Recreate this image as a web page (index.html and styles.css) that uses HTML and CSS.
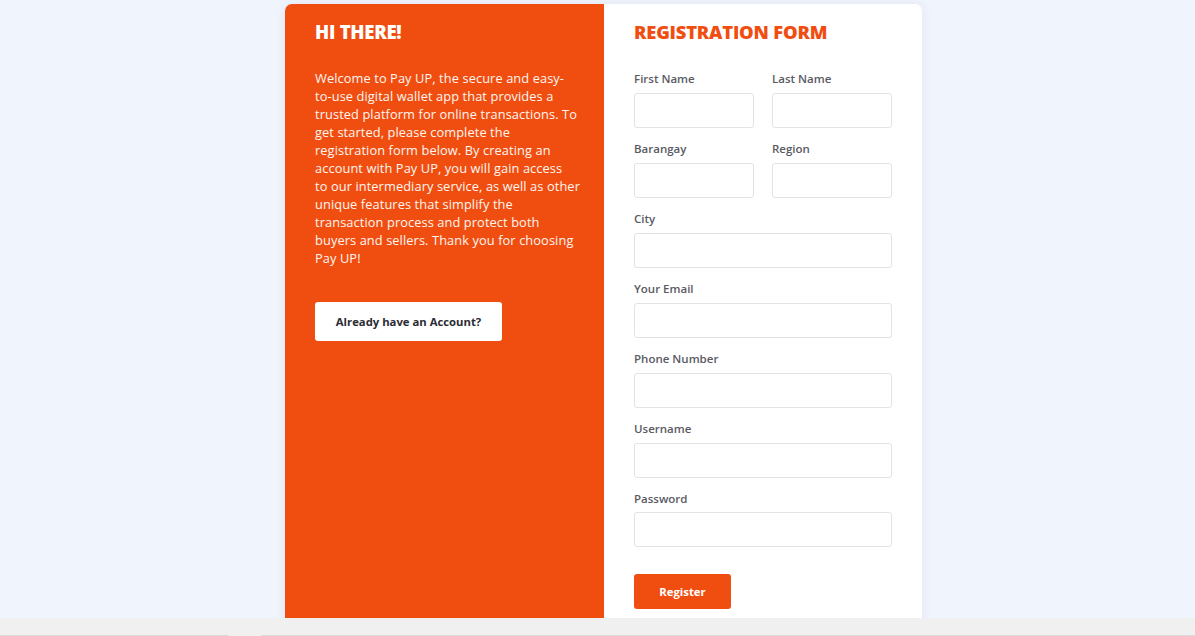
FILE: index.html
```html
<!DOCTYPE html>
<html lang="en">
<head>
<meta charset="utf-8">
<title>Pay UP - Registration</title>
<link rel="stylesheet" href="styles.css">
</head>
<body>
<div class="viewport">
  <div class="card">
    <section class="intro">
      <h1 class="intro-title">HI THERE!</h1>
      <p class="intro-text">Welcome to Pay UP, the secure and easy-<br>to-use digital wallet app that provides a<br>trusted platform for online transactions. To<br>get started, please complete the<br>registration form below. By creating an<br>account with Pay UP, you will gain access<br>to our intermediary service, as well as other<br>unique features that simplify the<br>transaction process and protect both<br>buyers and sellers. Thank you for choosing<br>Pay UP!</p>
      <button class="btn-account" type="button">Already have an Account?</button>
    </section>
    <section class="form-panel">
      <h2 class="form-title">REGISTRATION FORM</h2>
      <form class="form">
        <div class="row">
          <label class="field"><span class="label">First Name</span><input class="input" type="text"></label>
          <label class="field"><span class="label">Last Name</span><input class="input" type="text"></label>
        </div>
        <div class="row">
          <label class="field"><span class="label">Barangay</span><input class="input" type="text"></label>
          <label class="field"><span class="label">Region</span><input class="input" type="text"></label>
        </div>
        <label class="field"><span class="label">City</span><input class="input" type="text"></label>
        <label class="field"><span class="label">Your Email</span><input class="input" type="email"></label>
        <label class="field"><span class="label">Phone Number</span><input class="input" type="tel"></label>
        <label class="field"><span class="label">Username</span><input class="input" type="text"></label>
        <label class="field field-last"><span class="label">Password</span><input class="input" type="password"></label>
        <button class="btn-register" type="button">Register</button>
      </form>
    </section>
  </div>
</div>
<div class="hscroll"><div class="hscroll-thumb"></div></div>
</body>
</html>
```

FILE: styles.css
```css
* { box-sizing: border-box; }
html, body { margin: 0; padding: 0; height: 636px; overflow: hidden; }
body {
  font-family: "Open Sans", "Noto Sans", sans-serif;
  background: #f0f4fc;
  display: flex;
  flex-direction: column;
}
.viewport {
  height: 618px;
  overflow: hidden;
  display: flex;
  justify-content: center;
  padding-top: 4px;
  padding-left: 12px;
}
.card {
  display: flex;
  width: 637px;
  height: 700px;
  border-radius: 7px;
  overflow: hidden;
  background: #fff;
  box-shadow: 0 0 12px rgba(40, 60, 120, 0.08);
  flex-shrink: 0;
}
.intro {
  width: 319px;
  background: #f04e10;
  padding: 14px 30px 0 30px;
  color: #fff;
}
.intro-title {
  margin: 0;
  font-size: 18.6px;
  font-weight: 800;
  letter-spacing: -0.3px;
  line-height: 28px;
}
.intro-text {
  margin: 23px 0 0 0;
  font-size: 12.8px;
  letter-spacing: 0.1px;
  line-height: 18px;
  width: 275px;
  white-space: nowrap;
  color: #fff6f0;
}
.btn-account {
  margin-top: 35px;
  width: 187px;
  height: 39px;
  border: none;
  border-radius: 3px;
  background: #fff;
  color: #2b2b33;
  font-family: inherit;
  font-size: 11.3px;
  font-weight: 700;
  cursor: pointer;
}
.form-panel {
  flex: 1;
  padding: 14px 30px 0 30px;
}
.form-title {
  margin: 0;
  color: #f04e10;
  font-size: 18.4px;
  font-weight: 800;
  letter-spacing: -0.2px;
  line-height: 28px;
}
.form {
  margin-top: 25px;
  display: flex;
  flex-direction: column;
  gap: 13px;
}
.row {
  display: flex;
  gap: 18px;
}
.row .field { width: 120px; }
.field {
  display: flex;
  flex-direction: column;
  gap: 7px;
}
.label {
  font-size: 11.5px;
  font-weight: 600;
  color: #5a5a63;
  line-height: 15px;
}
.input {
  width: 100%;
  height: 35px;
  border: 1px solid #e3e3e6;
  border-radius: 3px;
  background: #fff;
  font-family: inherit;
  outline: none;
}
.field-last { gap: 6px; }
.btn-register {
  margin-top: 14px;
  width: 97px;
  height: 35px;
  border: none;
  border-radius: 3px;
  background: #f04e10;
  color: #fff;
  font-family: inherit;
  font-size: 11.3px;
  font-weight: 700;
  cursor: pointer;
}
.hscroll {
  height: 18px;
  background: #f0f0f0;
  border-bottom: 1px solid #d8d8d8;
  position: relative;
}
.hscroll-thumb {
  position: absolute;
  left: 228px;
  bottom: -1px;
  width: 34px;
  height: 1px;
  background: #f0f0f0;
}
```
